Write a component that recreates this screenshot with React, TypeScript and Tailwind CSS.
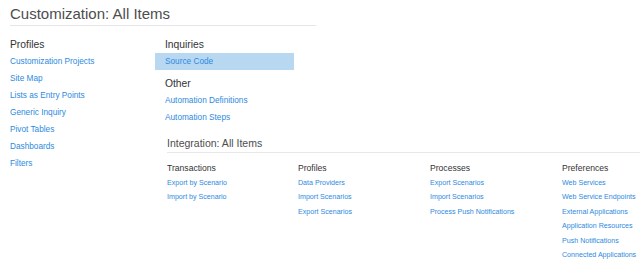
const col1 = [
  "Customization Projects",
  "Site Map",
  "Lists as Entry Points",
  "Generic Inquiry",
  "Pivot Tables",
  "Dashboards",
  "Filters",
];

const integration = [
  { title: "Transactions", items: ["Export by Scenario", "Import by Scenario"] },
  { title: "Profiles", items: ["Data Providers", "Import Scenarios", "Export Scenarios"] },
  { title: "Processes", items: ["Export Scenarios", "Import Scenarios", "Process Push Notifications"] },
  {
    title: "Preferences",
    items: [
      "Web Services",
      "Web Service Endpoints",
      "External Applications",
      "Application Resources",
      "Push Notifications",
      "Connected Applications",
    ],
  },
];

function Link({ label, active }: { label: string; active?: boolean }) {
  return (
    <div
      className={`h-[17px] leading-[17px] text-[8.25px] text-[#2d8ae0] whitespace-nowrap ${
        active ? "bg-[#b8d8f2] pl-[10px]" : ""
      }`}
    >
      {label}
    </div>
  );
}

function Heading({ label }: { label: string }) {
  return <div className="h-[17px] leading-[17px] text-[10.3px] text-[#333]">{label}</div>;
}

export default function App() {
  return (
    <div className="w-[640px] h-[267px] bg-white overflow-hidden font-['Liberation_Sans',Arial,sans-serif]">
      {/* TITLE */}
      <div className="ml-[10px] w-[306px] pt-[5px] pb-[2px] border-b border-[#e5e5e5]">
        <h1 className="text-[15px] leading-[18px] text-[#4d4d4d]">Customization: All Items</h1>
      </div>

      <div className="flex mt-[10px]">
        {/* PROFILES */}
        <div className="w-[155px] pl-[10px] shrink-0">
          <Heading label="Profiles" />
          {col1.map((l) => (
            <Link key={l} label={l} />
          ))}
        </div>

        <div className="flex-1">
          {/* INQUIRIES / OTHER */}
          <div className="w-[139px]">
            <div className="pl-[10px]">
              <Heading label="Inquiries" />
            </div>
            <Link label="Source Code" active />
            <div className="pl-[10px] mt-[5px]">
              <Heading label="Other" />
              <Link label="Automation Definitions" />
              <Link label="Automation Steps" />
            </div>
          </div>

          {/* INTEGRATION */}
          <div className="ml-[12px] mt-[10px]">
            <div className="pb-[2px] border-b border-[#e8e8e8]">
              <h2 className="text-[10.5px] leading-[14px] text-[#4d4d4d]">Integration: All Items</h2>
            </div>
            <div className="grid grid-cols-[131px_132px_132px_1fr] mt-[8px]">
              {integration.map((g) => (
                <div key={g.title}>
                  <div className="h-[15px] leading-[15px] text-[8.6px] text-[#333]">{g.title}</div>
                  {g.items.map((it) => (
                    <div key={it} className="h-[14.4px] leading-[14.4px] text-[7.1px] text-[#2d8ae0] whitespace-nowrap">
                      {it}
                    </div>
                  ))}
                </div>
              ))}
            </div>
          </div>
        </div>
      </div>
    </div>
  );
}
